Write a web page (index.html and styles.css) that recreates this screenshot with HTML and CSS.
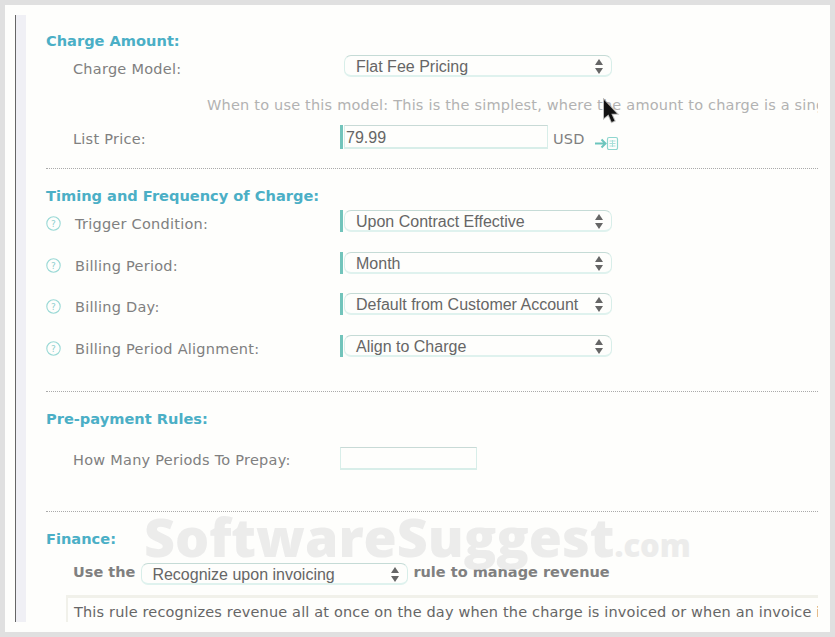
FILE: index.html
```html
<!DOCTYPE html>
<html lang="en">
<head>
<meta charset="utf-8">
<title>Charge settings</title>
<link rel="stylesheet" href="styles.css">
</head>
<body>
<div class="frame">
  <div class="panel">
    <div class="gutter"></div>
    <main class="main">
      <h2 class="title first">Charge Amount:</h2>
      <div class="row r-first">
        <div class="label">Charge Model:</div>
        <div class="mark none"></div>
        <div class="select"><span>Flat Fee Pricing</span><i class="arrows"></i></div>
      </div>
      <p class="hint">When to use this model: This is the simplest, where the amount to charge is a single price for the whole period of the charge</p>
      <div class="row r-price">
        <div class="label tall">List Price:</div>
        <div class="mark tall-mark"></div>
        <div class="input price">79.99</div>
        <div class="usd">USD</div>
        <svg class="calc" width="24" height="14" viewBox="0 0 24 14" fill="none" stroke="#6cc5bd">
          <path d="M0 7.500h10M6.500 3.500l4 4-4 4" stroke-width="2"/>
          <rect x="12.500" y="1.500" width="10" height="12" rx="1.500" stroke="#8fd6cf" stroke-width="1.200"/>
          <path d="M14.500 5h6M14.500 7.500h6M14.500 10h6M17.500 4v7" stroke="#a8e0da"/>
        </svg>
      </div>
      <hr class="rule">
      <h2 class="title">Timing and Frequency of Charge:</h2>
      <div class="rows">
        <div class="row">
          <div class="label help"><svg class="q" width="15" height="15" viewBox="0 0 15 15"><circle cx="7.500" cy="7.500" r="6.700"/><text x="7.500" y="11">?</text></svg><span>Trigger Condition:</span></div>
          <div class="mark"></div>
          <div class="select"><span>Upon Contract Effective</span><i class="arrows"></i></div>
        </div>
        <div class="row">
          <div class="label help"><svg class="q" width="15" height="15" viewBox="0 0 15 15"><circle cx="7.500" cy="7.500" r="6.700"/><text x="7.500" y="11">?</text></svg><span>Billing Period:</span></div>
          <div class="mark"></div>
          <div class="select"><span>Month</span><i class="arrows"></i></div>
        </div>
        <div class="row">
          <div class="label help"><svg class="q" width="15" height="15" viewBox="0 0 15 15"><circle cx="7.500" cy="7.500" r="6.700"/><text x="7.500" y="11">?</text></svg><span>Billing Day:</span></div>
          <div class="mark"></div>
          <div class="select"><span>Default from Customer Account</span><i class="arrows"></i></div>
        </div>
        <div class="row">
          <div class="label help"><svg class="q" width="15" height="15" viewBox="0 0 15 15"><circle cx="7.500" cy="7.500" r="6.700"/><text x="7.500" y="11">?</text></svg><span>Billing Period Alignment:</span></div>
          <div class="mark"></div>
          <div class="select"><span>Align to Charge</span><i class="arrows"></i></div>
        </div>
      </div>
      <hr class="rule rule-b">
      <h2 class="title">Pre-payment Rules:</h2>
      <div class="row r-prepay">
        <div class="label">How Many Periods To Prepay:</div>
        <div class="input prepay"></div>
      </div>
      <hr class="rule rule-c">
      <h2 class="title">Finance:</h2>
      <div class="use">
        <span class="use-text">Use the</span>
        <div class="select small"><span>Recognize upon invoicing</span><i class="arrows"></i></div>
        <span class="use-text">rule to manage revenue</span>
      </div>
      <div class="note">This rule recognizes revenue all at once on the day when the charge is invoiced or when an invoice is posted to the customer account</div>
    </main>
    <div class="watermark">SoftwareSuggest<span>.com</span></div>
  </div>
  <svg class="cursor" width="22" height="28" viewBox="0 0 22 28">
    <path class="shadow" d="M3 2v18l4.500-3.500 3.200 7.500 2.800-1.300-3.200-7h5.700z"/>
    <path class="arrow" d="M3 2v18l4.500-3.500 3.200 7.500 2.800-1.300-3.200-7h5.700z"/>
  </svg>
</div>
</body>
</html>
```

FILE: styles.css
```css
* { box-sizing: border-box; }
html, body { margin: 0; padding: 0; }
body { width: 835px; height: 637px; overflow: hidden; font-family: "DejaVu Sans", Verdana, sans-serif; }

.frame {
  position: relative;
  width: 835px;
  height: 637px;
  border: 5px solid #e0e0e0;
  background: #fefefc;
  padding: 10px 0 10px 10px;
}
.panel {
  position: relative;
  display: flex;
  width: 803px;
  height: 607px;
  overflow: hidden;
}
.gutter {
  flex: none;
  width: 11px;
  border-left: 1px solid #666;
  background: #f0f0f5;
}
.main { flex: none; width: 792px; padding: 18px 0 0 20px; }

.title {
  margin: 19px 0 0;
  font-size: 14.6px;
  line-height: 16px;
  font-weight: 700;
  color: #4bafc6;
  white-space: nowrap;
}
.title.first { margin-top: 0; }

.row { display: flex; align-items: flex-start; height: 22px; }
.r-first { margin-top: 6px; }
.label {
  flex: none;
  width: 294px;
  padding: 5px 0 0 27px;
  font-size: 14.5px;
  letter-spacing: .25px;
  line-height: 18px;
  color: #808080;
  white-space: nowrap;
}
.label.tall { padding-top: 5px; }
.label.help { display: flex; padding-left: 0; }
.label.help span { margin-left: 14px; }
.q { flex: none; margin-top: 1px; }
.q circle { fill: none; stroke: #9ad9d6; stroke-width: 1.1; }
.q text { font-family: "DejaVu Sans", sans-serif; font-size: 9px; letter-spacing: 0; fill: #8fcfcf; text-anchor: middle; }

.mark { flex: none; width: 4px; height: 22px; background: #72c4bb; border-right: 1px solid #fefefc; }
.mark.none { background: none; border: 0; }
.mark.tall-mark { height: 24px; }

.select {
  position: relative;
  flex: none;
  width: 268px;
  height: 22px;
  padding-left: 11px;
  border: 1px solid #d8eee9;
  border-top-color: #c5dbd6;
  border-bottom: 2px solid #dff2ee;
  border-radius: 7px;
  font-family: "Liberation Sans", Arial, sans-serif;
  font-size: 16px;
  line-height: 21px;
  color: #666;
  white-space: nowrap;
}
.arrows { position: absolute; top: 3px; right: 8px; width: 8px; height: 15px; }
.arrows::before, .arrows::after {
  content: "";
  position: absolute;
  left: 0;
  border-left: 4px solid transparent;
  border-right: 4px solid transparent;
}
.arrows::before { top: 0; border-bottom: 6px solid #666; }
.arrows::after { bottom: 0; border-top: 6px solid #666; }

.hint {
  margin: 19px 0 0;
  padding-left: 161px;
  font-size: 14.5px;
  letter-spacing: .2px;
  line-height: 18px;
  color: #b2b2b2;
  white-space: nowrap;
}
.r-price { margin-top: 11px; height: 24px; }

.input {
  flex: none;
  border: 1px solid #d8eee9;
  border-top-color: #c8dad6;
  border-bottom-width: 2px;
  font-family: "Liberation Sans", Arial, sans-serif;
  font-size: 16px;
  line-height: 23px;
  color: #666;
}
.price { width: 204px; height: 24px; padding-left: 1px; }
.usd {
  flex: none;
  margin-left: 5px;
  padding-top: 5px;
  font-size: 14.5px;
  letter-spacing: .25px;
  line-height: 18px;
  color: #808080;
}
.calc { flex: none; margin: 11px 0 0 10px; }

.rule {
  height: 0;
  margin: 19px 0 0;
  border: 0;
  border-top: 1px dotted #aaa;
}
.rule-b { margin-top: 34px; }
.rule-c { margin-top: 41px; }

.rows { display: flex; flex-direction: column; gap: 19.67px; margin-top: 6px; }

.r-prepay { margin-top: 20px; height: 23px; }
.prepay { width: 137px; height: 23px; }
.r-prepay .label { padding-top: 4px; }

.use { display: flex; align-items: flex-start; margin-top: 16px; padding-left: 27px; height: 22px; }
.use-text {
  flex: none;
  font-size: 14.5px;
  line-height: 18px;
  font-weight: 700;
  color: #808080;
  white-space: nowrap;
}
.select.small { width: 267px; margin: 0 5px 0 6px; padding-left: 10px; }

.note {
  margin: 10px 0 0 20px;
  height: 40px;
  padding: 5px 0 0 6px;
  border-top: 3px solid #f1f1ea;
  border-left: 2px solid #f1f1ea;
  font-size: 14.5px;
  letter-spacing: .16px;
  line-height: 18px;
  color: #666;
  white-space: nowrap;
  overflow: hidden;
}

.watermark {
  position: absolute;
  left: 129px;
  top: 490px;
  font-family: "Open Sans", sans-serif;
  font-weight: 800;
  font-size: 53.7px;
  line-height: 64px;
  color: #e6e6e6;
  opacity: .75;
  white-space: nowrap;
  pointer-events: none;
}
.watermark span { font-size: 31px; }

.cursor { position: absolute; left: 596px; top: 93px; }
.cursor .shadow { fill: #555; stroke: #777; stroke-width: 2; opacity: .5; }
.cursor .arrow { fill: #111; }
```
